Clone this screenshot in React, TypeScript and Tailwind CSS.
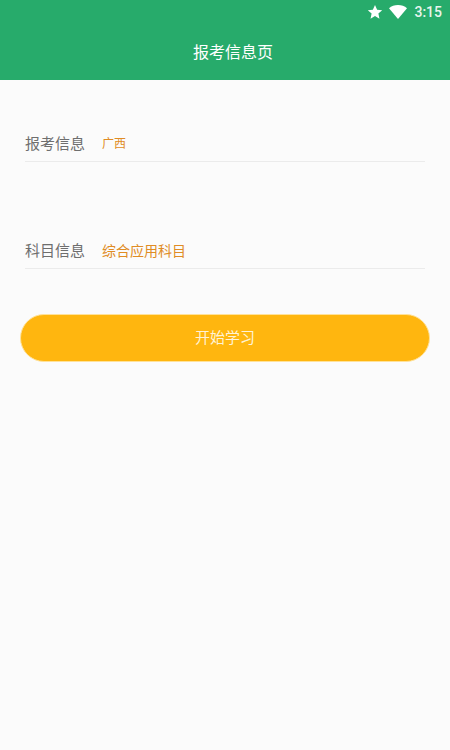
const cjk = "font-['Roboto','Noto_Sans_CJK_SC',sans-serif]";

const InfoRow = ({ label, value, small }: { label: string; value: string; small?: boolean }) => (
  <div className="flex items-center h-[37px] pt-[2px] mx-[25px] border-b border-[#ebebeb]">
    <span className="w-[77px] text-[15px] text-[#6e6e6e]">{label}</span>
    <span className={`${small ? "text-[12px]" : "text-[14px]"} text-[#e08c25]`}>{value}</span>
  </div>
);

export default function App() {
  return (
    <div className={`w-[450px] h-[750px] flex flex-col bg-[#fbfbfb] ${cjk}`}>
      {/* status bar + title */}
      <header className="h-[80px] bg-[#27ab6b] text-white">
        <div className="h-[24px] flex items-center justify-end pr-[8px]">
          <svg width="16" height="16" viewBox="0 0 24 24" fill="#fff" className="mr-[6px]">
            <path d="M12 1.5l3.2 7 7.6.8-5.7 5.1 1.6 7.6L12 18.1 5.3 22l1.6-7.6L1.2 9.300l7.600-.8z" />
          </svg>
          <svg width="18" height="14" viewBox="0 0 18 14" fill="#fff" className="mr-[7px]">
            <path d="M0 3.200C2.400 1.200 5.500 0 9 0s6.600 1.200 9 3.200L9 14z" />
          </svg>
          <span className="text-[14px] font-medium text-[#e8f5ee]">3:15</span>
        </div>
        <div className="h-[56px] flex items-center justify-center text-[16px] pt-[1px] pl-[16px]">报考信息页</div>
      </header>

      <main className="flex flex-col">
        <div className="mt-[45px]">
          <InfoRow label="报考信息" value="广西" small />
        </div>
        <div className="mt-[70px]">
          <InfoRow label="科目信息" value="综合应用科目" />
        </div>
        <button className="mt-[45px] mx-[20px] h-[48px] rounded-full bg-[#ffb60f] border border-[#ffe29a] text-[15px] text-[#fff3d6]">
          开始学习
        </button>
      </main>
    </div>
  );
}
